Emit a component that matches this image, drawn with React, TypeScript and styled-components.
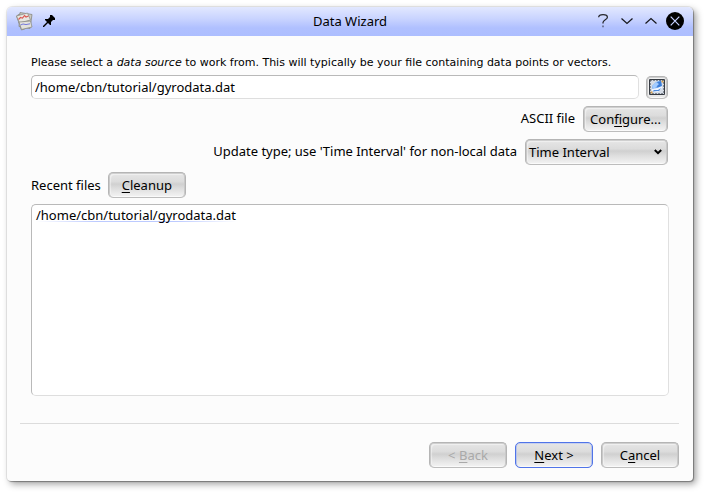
import React from "react";
import styled, { createGlobalStyle, css } from "styled-components";

const GlobalStyle = createGlobalStyle`
  * { box-sizing: border-box; }
  html, body { margin: 0; background: #fff; overflow: hidden; }
  body { font-family: "Noto Sans", sans-serif; font-size: 13px; color: #000; }
`;

const Desktop = styled.main`
  width: 706px;
  height: 494px;
  padding: 7px 0 0 7px;
  background: #fff;
`;

const Window = styled.section`
  display: flex;
  flex-direction: column;
  width: 686px;
  height: 474px;
  overflow: hidden;
  border-radius: 5px 5px 4px 4px;
  background: #fcfcfc;
  box-shadow: 0 0 0 1px rgba(0, 0, 0, 0.07), 1px 1px 1px rgba(0, 0, 0, 0.28), 3px 3px 7px rgba(0, 0, 0, 0.38);
`;

const TitleBar = styled.header`
  display: grid;
  grid-template-columns: 100px 1fr 100px;
  align-items: center;
  flex: none;
  height: 29px;
  background: linear-gradient(#e2e8ff 0%, #c8d3ff 42%, #b0c0ff 72%, #adbeff 100%);
`;

const TitleTools = styled.div`
  display: flex;
  align-items: center;
  gap: 9px;
  padding: 0 0 1px 8px;
`;

const Title = styled.h1`
  margin: 0;
  padding-bottom: 2px;
  font-size: 13px;
  font-weight: 400;
  line-height: 26px;
  text-align: center;
`;

const WindowControls = styled.div`
  display: flex;
  align-items: center;
  justify-content: flex-end;
  gap: 6px;
  padding: 0 9px 1px 0;
`;

const Glyph = styled.svg`
  display: block;
  flex: none;
`;

const Page = styled.div`
  flex: none;
  height: 387px;
  padding: 19px 24px 0 24px;
`;

const Instruction = styled.p`
  height: 14px;
  margin: 0 0 6px;
  font-family: "DejaVu Sans", sans-serif;
  font-size: 11px;
  line-height: 15px;
  white-space: nowrap;
`;

const Row = styled.div<{ $end?: boolean; $gap?: number; $after?: number; $inset?: number }>`
  display: flex;
  align-items: center;
  justify-content: ${(p) => (p.$end ? "flex-end" : "flex-start")};
  gap: ${(p) => p.$gap ?? 8}px;
  padding-right: ${(p) => p.$inset ?? 0}px;
  margin-bottom: ${(p) => p.$after ?? 0}px;
`;

const sunken = css`
  border: 1px solid #b9b9b9;
  border-right-color: #e0e0e0;
  border-bottom-color: #dedede;
  border-radius: 5px;
  background: #fff;
`;

const PathInput = styled.input`
  ${sunken}
  flex: 1;
  height: 24px;
  padding: 0 3px;
  font: 13px "Noto Sans", sans-serif;
  color: #000;
  outline: none;
`;

const Label = styled.span<{ $raised?: boolean }>`
  padding-bottom: ${(p) => (p.$raised ? 2 : 0)}px;
  font-size: 13px;
  line-height: 24px;
  letter-spacing: ${(p) => (p.$raised ? "-0.02px" : "normal")};
  white-space: nowrap;
`;

const raised = css`
  border: 1px solid #b5b5b5;
  border-bottom-color: #bdbdbd;
  border-radius: 5px;
  background: linear-gradient(#e6e6e6, #dcdcdc 36%, #d0d0d0 46%, #dedede 65%, #f4f4f4);
  box-shadow: inset 1px 0 #c9c9c9, inset -1px 0 #c9c9c9, inset 0 1px #cfcfcf, inset 0 -1px #fafafa, inset 2px 2px 1px rgba(255, 255, 255, 0.45);
`;

const PushButton = styled.button<{ $width: number; $primary?: boolean }>`
  ${raised}
  display: block;
  width: ${(p) => p.$width}px;
  height: 26px;
  padding: 0;
  font: 13px/23px "Noto Sans", sans-serif;
  color: #000;
  white-space: nowrap;
  ${(p) => p.$primary && css`
    border-color: #5074e8;
    box-shadow: inset 1px 0 #b9c5eb, inset -1px 0 #b9c5eb, inset 0 1px #c7d0ed, inset 0 -1px #fafafa;
  `}
  &:disabled {
    color: #a9a9a9;
  }
`;

const Mnemonic = styled.span`
  text-decoration: underline;
  text-decoration-thickness: 1px;
  text-underline-offset: 2px;
  text-decoration-skip-ink: none;
`;

const BrowseButton = styled.button`
  ${raised}
  display: grid;
  place-items: center;
  width: 22px;
  height: 23px;
  padding: 0;
  background: #e9e9e9;
`;

const ComboBox = styled.button`
  ${raised}
  display: flex;
  align-items: center;
  justify-content: space-between;
  width: 143px;
  height: 26px;
  padding: 0 5px 0 3px;
  font: 13px/24px "Noto Sans", sans-serif;
  color: #000;
`;

const FileList = styled.ul`
  ${sunken}
  height: 192px;
  margin: 0;
  padding: 1px 4px;
  list-style: none;
`;

const FileItem = styled.li`
  width: 201px;
  font-size: 13px;
  line-height: 18px;
  background: linear-gradient(90deg, transparent, #bccaff 30%, #bccaff 70%, transparent) 0 15px / 100% 1px no-repeat;
`;

const Footer = styled.footer`
  display: flex;
  justify-content: flex-end;
  gap: 8px;
  margin: 0 14px 0 13px;
  padding-top: 18px;
  border-top: 1px solid #dcdcdc;
`;

const ChartStackIcon = () => (
  <Glyph width="19" height="20" viewBox="0 0 19 20">
    <path d="m1.5 5 3-2 10 13-8 3z" fill="#aeada4" stroke="#85867e" strokeWidth=".8" />
    <path d="m5 1.5 12 2-2 14-11-2z" fill="#cac9bf" stroke="#86877f" strokeWidth=".8" />
    <path d="m1.5 5 11-3 3 7-11 3z" fill="#e7e6e1" stroke="#92918a" strokeWidth=".8" />
    <path d="m3.5 8.5 2-2 2 .7 2-2.7 1.5 1.5 2.5-1" fill="none" stroke="#dc5752" strokeWidth="1.1" />
    <path d="m4 11 11.5-1 1.5 6-10.5 2.5z" fill="#e2e1dc" stroke="#8d8d85" strokeWidth=".8" />
    <path d="m5.5 14 2.5-1 3 .6 4-.8" fill="none" stroke="#777bdc" />
  </Glyph>
);

const PinIcon = () => (
  <Glyph width="12" height="12" viewBox="0 0 12 12">
    <path d="M7 0h2l3 3v2H10L8 7v3H7L5 8 1 12H0v-1l4-4-2-2V4h3l2-2z" />
  </Glyph>
);

const HelpIcon = () => (
  <Glyph width="18" height="18" viewBox="0 0 18 18" fill="none" stroke="#26272d" strokeWidth="1.25">
    <path d="M4.6 5.2C4.8 3.4 6.4 2.6 9 2.6s4.4.9 4.4 2.7c0 2.3-4.4 2.7-4.4 5.2v1" />
    <path d="M9 13.5v1.8" stroke="#59617e" strokeWidth="1.5" />
  </Glyph>
);

const ChevronIcon = ({ up = false }: { up?: boolean }) => (
  <Glyph width="18" height="18" viewBox="0 0 18 18" fill="none" stroke="#17181e" strokeWidth="1.25">
    <path d={up ? "m3.5 11.5 5.5-5 5.5 5" : "m3.5 6.5 5.5 5 5.5-5"} />
  </Glyph>
);

const CloseIcon = () => (
  <Glyph width="18" height="18" viewBox="0 0 18 18">
    <circle cx="9" cy="9" r="9" fill="#000" />
    <path d="m4.7 4.7 8.6 8.6m0-8.6-8.6 8.6" stroke="#c5d0ff" strokeWidth="1.2" />
  </Glyph>
);

const BrowseIcon = () => (
  <Glyph width="16" height="16" viewBox="0 0 16 16">
    <path fill="#d5dce6" d="M.5.5h15v15H.5z" />
    <path d="m3 7 4-4 5-2 1 7-3 4-6 1z" fill="#78adf0" />
    <path d="m7 4 5-2 1 6-4 2z" fill="#3b7dd8" />
    <path d="m3 7 4-4 3 2-5 5z" fill="#a3ccff" />
    <path d="m3 10 5-1 5-2v2l-4 4-6-1z" fill="#eff5ff" />
    <path d="M4 11h5l3-2-2 3H5z" fill="#4a8ade" />
    <path d="M1.5 12.5h2v2h-2zm11-11h2v2h-2z" fill="#d9a04d" />
    <path d="M.5.5h15v15H.5z" fill="none" stroke="#363b42" />
    <path d="M1.5 1.5h13v13h-13z" fill="none" stroke="#353d47" strokeDasharray="1 2" />
  </Glyph>
);

export default function App() {
  const file = "/home/cbn/tutorial/gyrodata.dat";
  return (
    <Desktop>
      <GlobalStyle />
      <Window>
        <TitleBar>
          <TitleTools><ChartStackIcon /><PinIcon /></TitleTools>
          <Title>Data Wizard</Title>
          <WindowControls>
            <HelpIcon /><ChevronIcon /><ChevronIcon up /><CloseIcon />
          </WindowControls>
        </TitleBar>
        <Page>
          <Instruction>
            Please select a <em>data source</em> to work from. This will typically be your file containing data points or vectors.
          </Instruction>
          <Row $gap={7} $after={7} $inset={1}>
            <PathInput defaultValue={file} aria-label="Data source" />
            <BrowseButton aria-label="Browse"><BrowseIcon /></BrowseButton>
          </Row>
          <Row $end $after={7} $inset={1}>
            <Label $raised>ASCII file</Label>
            <PushButton $width={85}>Con<Mnemonic>f</Mnemonic>igure...</PushButton>
          </Row>
          <Row $end $after={7} $inset={1}>
            <Label $raised>Update type; use 'Time Interval' for non-local data</Label>
            <ComboBox>
              Time Interval
              <Glyph width="8" height="6" viewBox="0 0 8 6">
                <path d="m.8 1 3.2 3.2L7.2 1" fill="none" stroke="#000" strokeWidth="2" />
              </Glyph>
            </ComboBox>
          </Row>
          <Row $gap={7} $after={6}>
            <Label>Recent files</Label>
            <PushButton $width={78}><Mnemonic>C</Mnemonic>leanup</PushButton>
          </Row>
          <FileList><FileItem>{file}</FileItem></FileList>
        </Page>
        <Footer>
          <PushButton $width={78} disabled>&lt; <Mnemonic>B</Mnemonic>ack</PushButton>
          <PushButton $width={78} $primary><Mnemonic>N</Mnemonic>ext &gt;</PushButton>
          <PushButton $width={78}>C<Mnemonic>a</Mnemonic>ncel</PushButton>
        </Footer>
      </Window>
    </Desktop>
  );
}
